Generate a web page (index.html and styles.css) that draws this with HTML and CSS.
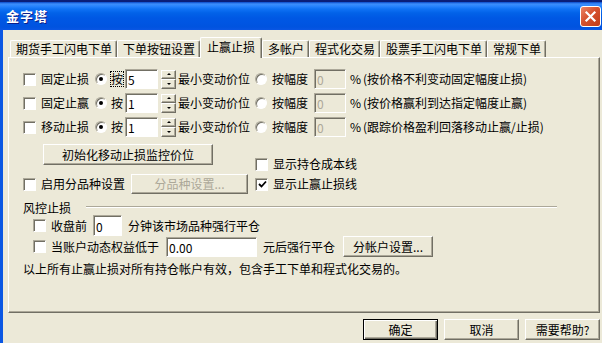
FILE: index.html
```html
<!DOCTYPE html>
<html lang="zh-CN">
<head>
  <meta charset="UTF-8">
  <meta name="viewport" content="width=device-width, initial-scale=1">
  <title>金字塔</title>
  <link rel="stylesheet" href="styles.css">
</head>
<body>

<div class="window">
  <div class="titlebar">
    <span class="title">金字塔</span>
    <button class="close" aria-label="关闭">
      <svg width="13" height="13" viewBox="0 0 13 13"><path d="M2.5 2.5 L10.5 10.5 M10.5 2.5 L2.5 10.5" stroke="#fff" stroke-width="2.2" stroke-linecap="square"/></svg>
    </button>
  </div>

  <div class="frame">
    <ul class="tabs">
      <li class="tab">期货手工闪电下单</li>
      <li class="tab">下单按钮设置</li>
      <li class="tab active">止赢止损</li>
      <li class="tab">多帐户</li>
      <li class="tab">程式化交易</li>
      <li class="tab">股票手工闪电下单</li>
      <li class="tab">常规下单</li>
    </ul>

    <div class="panel">
      <div class="stops">
        <div class="row">
          <label class="opt"><span class="cb"></span>固定止损</label>
          <label class="by"><span class="rb on"></span><span class="focus">按</span></label>
          <input class="field ticks" type="text" value="5">
          <span class="spin"><i class="up"></i><i class="down"></i></span>
          <span class="unit">最小变动价位</span>
          <label class="by2"><span class="rb"></span>按幅度</label>
          <input class="field pctbox" type="text" value="0" disabled>
          <span class="pct">%</span>
          <span>(按价格不利变动固定幅度止损)</span>
        </div>
        <div class="row">
          <label class="opt"><span class="cb"></span>固定止赢</label>
          <label class="by"><span class="rb on"></span><span class="nofocus">按</span></label>
          <input class="field ticks" type="text" value="1">
          <span class="spin"><i class="up"></i><i class="down"></i></span>
          <span class="unit">最小变动价位</span>
          <label class="by2"><span class="rb"></span>按幅度</label>
          <input class="field pctbox" type="text" value="0" disabled>
          <span class="pct">%</span>
          <span>(按价格赢利到达指定幅度止赢)</span>
        </div>
        <div class="row">
          <label class="opt"><span class="cb"></span>移动止损</label>
          <label class="by"><span class="rb on"></span><span class="nofocus">按</span></label>
          <input class="field ticks" type="text" value="1">
          <span class="spin"><i class="up"></i><i class="down"></i></span>
          <span class="unit">最小变动价位</span>
          <label class="by2"><span class="rb"></span>按幅度</label>
          <input class="field pctbox" type="text" value="0" disabled>
          <span class="pct">%</span>
          <span>(跟踪价格盈利回落移动止赢/止损)</span>
        </div>
      </div>

      <div class="mid">
        <div class="mid-left">
          <button class="btn init">初始化移动止损监控价位</button>
          <div class="row split">
            <label class="opt wide"><span class="cb"></span>启用分品种设置</label>
            <button class="btn variety" disabled>分品种设置...</button>
          </div>
        </div>
        <div class="mid-right">
          <div class="row">
            <label class="opt"><span class="cb"></span>显示持仓成本线</label>
          </div>
          <div class="row">
            <label class="opt"><span class="cb checked"><svg width="9" height="9" viewBox="0 0 9 9"><path d="M1 4 L3.5 6.5 L8 1.5" fill="none" stroke="#000" stroke-width="1.8"/></svg></span>显示止赢止损线</label>
          </div>
        </div>
      </div>

      <div class="group-head">
        <span>风控止损</span>
        <span class="rule"></span>
      </div>
      <div class="row risk first">
        <label class="opt"><span class="cb"></span>收盘前</label>
        <input class="field mins" type="text" value="0">
        <span class="after">分钟该市场品种强行平仓</span>
      </div>
      <div class="row risk">
        <label class="opt"><span class="cb"></span>当账户动态权益低于</label>
        <input class="field equity" type="text" value="0.00">
        <span class="after">元后强行平仓</span>
        <button class="btn accounts">分帐户设置...</button>
      </div>
      <p class="note">以上所有止赢止损对所有持仓帐户有效，包含手工下单和程式化交易的。</p>
    </div>

    <div class="actions">
      <button class="btn default">确定</button>
      <button class="btn">取消</button>
      <button class="btn">需要帮助?</button>
    </div>
  </div>
</div>

</body>
</html>
```

FILE: styles.css
```css
*, *:after, *:before {
  box-sizing: border-box;
}
html, body {
  margin: 0;
  height: 100%;
}
body {
  background: #ECE9D8;
  color: #000;
  font-family: "Noto Sans CJK SC", sans-serif;
  font-size: 12px;
  line-height: 14px;
  overflow: hidden;
}
.window {
  display: flex;
  flex-direction: column;
  height: 343px;
  width: 602px;
}

/* title bar */
.titlebar {
  align-items: center;
  background: linear-gradient(to bottom, #0a49c9 0, #3d8ffc 2px, #2a86ff 4px, #0f72f5 7px, #0262e8 11px, #0058e4 16px, #0055e2 21px, #0053df 25px, #0a56e4 28px);
  border-top: 2px solid #0a1f7a;
  display: flex;
  flex: none;
  height: 30px;
  justify-content: space-between;
  padding: 0 1px 0 6px;
}
.title {
  color: #FFF;
  font-size: 13px;
  font-weight: bold;
  letter-spacing: 1px;
  text-shadow: 1px 1px #0b1e8a;
}
.close {
  align-items: center;
  background: linear-gradient(to bottom right, #eb8466, #d6522f 45%, #c23c18);
  border: 1px solid #FFF;
  border-radius: 3px;
  display: flex;
  height: 21px;
  justify-content: center;
  padding: 0;
  width: 21px;
}

/* dialog body */
.frame {
  border-left: 3px solid #0b57e3;
  display: flex;
  flex: 1;
  flex-direction: column;
  padding: 0 2px 0 5px;
}
.tabs {
  align-items: flex-end;
  display: flex;
  height: 27px;
  list-style: none;
  margin: 0;
  padding: 0 0 0 2px;
}
.tab {
  border-left: 1px solid #FFF;
  border-radius: 2px 2px 0 0;
  border-right: 1px solid #716F64;
  border-top: 1px solid #FFF;
  box-shadow: inset -1px 0 #ACA899;
  height: 17px;
  line-height: 16px;
  padding: 0 4px 0 5px;
  white-space: nowrap;
}
.tab.active {
  background: #ECE9D8;
  height: 21px;
  line-height: 18px;
  margin-bottom: -1px;
  padding: 0 6px;
  position: relative;
  z-index: 1;
}
.panel {
  border: 1px solid;
  border-color: #FFF #716F64 #716F64 #FFF;
  box-shadow: inset -1px -1px #ACA899;
  display: flex;
  flex-direction: column;
  height: 256px;
  padding: 11px 0 0 14px;
}

/* rows */
.stops {
  display: flex;
  flex-direction: column;
  gap: 4px;
}
.row {
  align-items: center;
  display: flex;
  height: 20px;
  white-space: nowrap;
}
.opt {
  align-items: center;
  display: flex;
  width: 72px;
}
.opt.wide {
  width: 108px;
}
.cb {
  align-items: center;
  background: #FFF;
  border: 1px solid;
  border-color: #ACA899 #FFF #FFF #ACA899;
  box-shadow: inset 1px 1px #716F64;
  display: inline-flex;
  flex: none;
  height: 13px;
  justify-content: center;
  margin-right: 5px;
  padding: 1px 0 0 1px;
  width: 13px;
}
.rb {
  background: #FFF;
  border: 1px solid;
  border-color: #ACA899 #FFF #FFF #ACA899;
  border-radius: 50%;
  box-shadow: inset 1px 1px #716F64;
  display: inline-block;
  flex: none;
  height: 12px;
  position: relative;
  width: 12px;
}
.rb.on:after {
  background: #000;
  border-radius: 50%;
  content: "";
  height: 4px;
  left: 3px;
  position: absolute;
  top: 3px;
  width: 4px;
}
.by {
  align-items: center;
  display: flex;
  width: 30px;
}
.by .focus, .by .nofocus {
  border: 1px dotted #000;
  margin-left: 3px;
}
.by .nofocus {
  border-color: transparent;
}
.by2 {
  align-items: center;
  display: flex;
  width: 59px;
}
.by2 .rb {
  margin-right: 5px;
}
.field {
  background: #FFF;
  border: 1px solid;
  border-color: #ACA899 #FFF #FFF #ACA899;
  box-shadow: inset 1px 1px #716F64;
  color: #000;
  font: inherit;
  height: 20px;
  margin: 0;
  outline: none;
  padding: 1px 2px 0;
}
.field[disabled] {
  background: #ECE9D8;
  color: #ACA899;
}
.ticks {
  width: 33px;
}
.pctbox {
  width: 32px;
}
.spin {
  display: flex;
  flex-direction: column;
  height: 19px;
  margin: 0 2px 0 3px;
  width: 15px;
}
.spin i {
  align-items: center;
  background: #ECE9D8;
  border: 1px solid;
  border-color: #FFF #716F64 #716F64 #FFF;
  box-shadow: inset -1px -1px #ACA899;
  display: flex;
  flex: 1;
  justify-content: center;
}
.spin i:after {
  border-left: 2px solid transparent;
  border-right: 2px solid transparent;
  content: "";
  height: 0;
  width: 0;
}
.spin .up:after {
  border-bottom: 2px solid #000;
}
.spin .down:after {
  border-top: 2px solid #000;
}
.unit {
  width: 77px;
}
.pct {
  margin-left: 4px;
  width: 13px;
}

/* buttons */
.btn {
  background: #ECE9D8;
  border: 1px solid;
  border-color: #FFF #716F64 #716F64 #FFF;
  box-shadow: inset -1px -1px #ACA899;
  color: #000;
  font: inherit;
  height: 21px;
  padding: 0;
}
.btn[disabled] {
  color: #ACA899;
}
.init {
  margin-left: 20px;
  width: 170px;
}
.variety {
  height: 20px;
  width: 117px;
}

/* middle block */
.mid {
  display: grid;
  grid-template-columns: 232px auto;
  margin-top: 7px;
}
.mid-left .split {
  margin-top: 9px;
}
.mid-right {
  padding-top: 10px;
}

/* risk group */
.group-head {
  align-items: center;
  display: flex;
  height: 14px;
  margin-top: 7px;
}
.rule {
  border-bottom: 1px solid #FFF;
  border-top: 1px solid #ACA899;
  margin: -3px 0 0 15px;
  width: 471px;
}
.risk {
  height: 21px;
  padding-left: 10px;
}
.risk .opt {
  width: auto;
}
.mins {
  height: 21px;
  margin-left: 6px;
  width: 29px;
}
.equity {
  margin-left: 7px;
  width: 91px;
}
.after {
  margin-left: 6px;
}
.accounts {
  margin-left: 8px;
  width: 90px;
}
.note {
  margin: 5px 0 0;
}

/* dialog buttons */
.actions {
  display: flex;
  gap: 6px;
  justify-content: flex-end;
  margin-top: 6px;
}
.actions .btn {
  width: 75px;
}
.actions .default {
  border-color: #000;
  box-shadow: inset 1px 1px #FFF, inset -1px -1px #716F64, inset -2px -2px #ACA899;
}
```
